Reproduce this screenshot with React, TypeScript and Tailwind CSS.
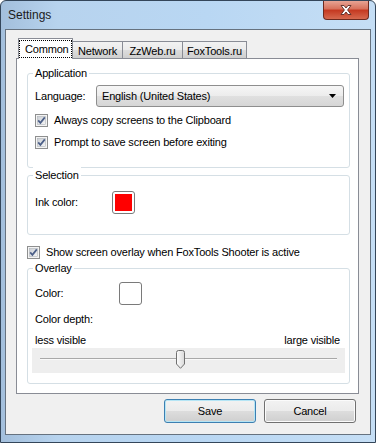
import React from "react";

const font = { fontFamily: '"Liberation Sans", Arial, sans-serif' };

function CheckBox() {
  return (
    <svg width="13" height="13" viewBox="0 0 13 13" className="shrink-0">
      <defs>
        <linearGradient id="cbg" x1="0" y1="0" x2="1" y2="1">
          <stop offset="0" stopColor="#cbcfd5" />
          <stop offset="1" stopColor="#f6f6f6" />
        </linearGradient>
      </defs>
      <rect x="0.5" y="0.5" width="12" height="12" fill="#f4f4f4" stroke="#8e8f8f" />
      <rect x="2.5" y="2.5" width="8" height="8" fill="url(#cbg)" stroke="#b0b4ba" strokeWidth="0.6" />
      <path d="M3.2 6.4 L5.4 8.9 L9.8 3.4" fill="none" stroke="#4c5f88" strokeWidth="1.7" />
    </svg>
  );
}

function Group({ title, className, children }: { title: string; className: string; children?: React.ReactNode }) {
  return (
    <div className={"relative w-[323px] rounded-[3px] border border-[#d5dfe5] bg-white " + className}>
      <span className="absolute left-[5px] top-[-9px] bg-white px-[2px] leading-[16px]">{title}</span>
      {children}
    </div>
  );
}

function Tab({ label, w, selected }: { label: string; w: string; selected?: boolean }) {
  if (selected) {
    return (
      <div className={"relative flex h-[21px] items-start justify-start border-x border-t border-[#898c95] bg-white " + w}>
        <div className="ml-[0px] mt-[1px] flex h-[18px] w-[54px] items-center border border-dotted border-black pl-[5px] leading-[16px]">
          {label}
        </div>
      </div>
    );
  }
  return (
    <div
      className={
        "flex h-[18px] items-center justify-center border-t border-r border-b border-[#898c95] bg-[linear-gradient(to_bottom,#f2f2f2,#ebebeb_50%,#dddddd_50%,#cfcfcf)] pt-[1px] leading-[16px] " +
        w
      }
    >
      {label}
    </div>
  );
}

export default function App() {
  return (
    <div
      style={font}
      className="h-[443px] w-[376px] overflow-hidden rounded-t-[6px] border border-[#34465a] bg-[linear-gradient(to_right,#a3bfdc,#b7d3ee_15%,#b9d7f3_55%,#c5def5)] text-[11px] tracking-[-0.18px] text-black"
    >
      {/* title bar */}
      <div className="flex h-[28px] items-start">
        <div className="pl-[7px] text-[12px] leading-[28px] tracking-normal text-[#1b1b1b]">Settings</div>
        <div className="ml-auto mr-[6px] -mt-px flex h-[20px] w-[46px] items-center justify-center rounded-b-[4px] border border-t-0 border-[#6d2a1f] bg-[linear-gradient(to_bottom,#e9aa9b,#d8735e_45%,#c53a22_55%,#d6694f)]">
          <svg width="14" height="12" viewBox="0 0 14 12">
            <path
              d="M2 1.5 L5 1.5 L7 4 L9 1.5 L12 1.5 L8.6 6 L12 10.5 L9 10.5 L7 8 L5 10.5 L2 10.5 L5.4 6 Z"
              fill="#ffffff"
              stroke="#5a2a24"
              strokeWidth="0.9"
              strokeLinejoin="round"
            />
          </svg>
        </div>
      </div>

      {/* client */}
      <div className="ml-[4px] h-[406px] w-[366px] border border-[#66727f] bg-[#f0f0f0]">
        <div className="pl-[10px] pt-[8px]">
          {/* tabs */}
          <div className="relative z-10 -mb-px ml-[2px] flex h-[21px] items-end">
            <Tab label="Common" w="w-[55px]" selected />
            <Tab label="Network" w="w-[50px]" />
            <Tab label="ZzWeb.ru" w="w-[60px]" />
            <Tab label="FoxTools.ru" w="w-[64px]" />
          </div>

          {/* panel */}
          <div className="h-[336px] w-[343px] border border-[#898c95] bg-white pl-[10px] pt-[14px]">
            <Group title="Application" className="h-[95px]">
              <div className="ml-[7px] mt-[11px] flex h-[22px] items-center">
                <div className="w-[61px]">Language:</div>
                <div className="flex h-[22px] w-[248px] items-center rounded-[3px] border border-[#8e8e8e] bg-[linear-gradient(to_bottom,#f6f6f6,#ececec_50%,#e0e0e0_50%,#d6d6d6)] pl-[5px]">
                  <span>English (United States)</span>
                  <svg className="ml-auto mr-[6px]" width="8" height="4" viewBox="0 0 8 4">
                    <path d="M0 0 H7 L3.5 4 Z" fill="#000" />
                  </svg>
                </div>
              </div>
              <div className="ml-[7px] mt-[2px] flex h-[22px] items-center gap-[6px]">
                <CheckBox />
                <span>Always copy screens to the Clipboard</span>
              </div>
              <div className="ml-[7px] flex h-[22px] items-center gap-[6px]">
                <CheckBox />
                <span>Prompt to save screen before exiting</span>
              </div>
            </Group>

            <Group title="Selection" className="mt-[7px] h-[60px]">
              <div className="ml-[7px] mt-[15px] flex h-[23px] items-center">
                <div className="w-[77px]">Ink color:</div>
                <div className="h-[23px] w-[23px] rounded-[3px] border border-[#7a7a7a] bg-white p-[2px]">
                  <div className="h-full w-full bg-[#ff0000]" />
                </div>
              </div>
            </Group>

            <div className="mt-[9px] flex h-[16px] items-center gap-[6px]">
              <CheckBox />
              <span>Show screen overlay when FoxTools Shooter is active</span>
            </div>

            <Group title="Overlay" className="mt-[8px] h-[116px]">
              <div className="ml-[7px] mt-[13px] flex h-[23px] items-center">
                <div className="w-[84px]">Color:</div>
                <div className="h-[23px] w-[23px] rounded-[3px] border border-[#7a7a7a] bg-white" />
              </div>
              <div className="ml-[7px] mt-[6px] flex h-[16px] items-center">Color depth:</div>
              <div className="ml-[7px] mr-[9px] mt-[5px] flex h-[16px] items-center justify-between">
                <span>less visible</span>
                <span>large visible</span>
              </div>
              <div className="relative mx-[4px] h-[25px] bg-[#eeeeee] pt-[10px]">
                <div className="mx-[8px] h-px bg-[#a8a8a8]" />
                <div className="mx-[8px] h-px bg-[#f9f9f9]" />
                <svg className="absolute left-[144px] top-[2px]" width="9" height="19" viewBox="0 0 9 19">
                  <defs>
                    <linearGradient id="thumb" x1="0" y1="0" x2="1" y2="0">
                      <stop offset="0" stopColor="#fdfdfd" />
                      <stop offset="1" stopColor="#d9d9d9" />
                    </linearGradient>
                  </defs>
                  <path
                    d="M0.5 2.5 Q0.5 0.5 2.5 0.5 H6.5 Q8.5 0.5 8.5 2.5 V14 L4.5 18.3 L0.5 14 Z"
                    fill="url(#thumb)"
                    stroke="#707070"
                  />
                </svg>
              </div>
            </Group>
          </div>

          {/* buttons */}
          <div className="mr-[14px] mt-[5px] flex justify-end gap-[8px]">
            <div className="flex h-[24px] w-[92px] items-center justify-center rounded-[3px] border border-[#3c7fb1] bg-[linear-gradient(to_bottom,#f2f2f2,#ebebeb_50%,#dddddd_50%,#cfcfcf)] shadow-[inset_0_0_0_1px_#b5e5f5]">
              Save
            </div>
            <div className="flex h-[24px] w-[92px] items-center justify-center rounded-[3px] border border-[#707070] bg-[linear-gradient(to_bottom,#f2f2f2,#ebebeb_50%,#dddddd_50%,#cfcfcf)] shadow-[inset_0_0_0_1px_#fbfbfb]">
              Cancel
            </div>
          </div>
        </div>
      </div>
    </div>
  );
}
